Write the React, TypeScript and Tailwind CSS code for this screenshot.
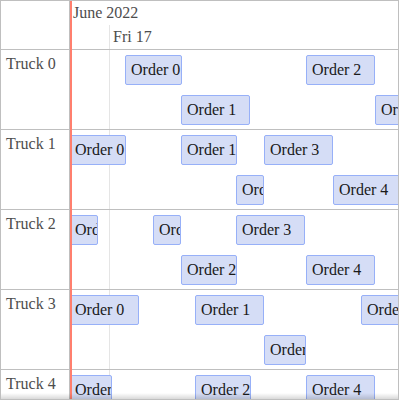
import React from "react";

type Item = { label: string; left: number; width: number; lane: number };

const rows: { name: string; items: Item[] }[] = [
  {
    name: "Truck 0",
    items: [
      { label: "Order 0", left: 55, width: 57, lane: 0 },
      { label: "Order 2", left: 236, width: 69, lane: 0 },
      { label: "Order 1", left: 111, width: 69, lane: 1 },
      { label: "Order 3", left: 305, width: 69, lane: 1 },
    ],
  },
  {
    name: "Truck 1",
    items: [
      { label: "Order 0", left: -1, width: 57, lane: 0 },
      { label: "Order 1", left: 111, width: 56, lane: 0 },
      { label: "Order 3", left: 194, width: 69, lane: 0 },
      { label: "Order 2", left: 166, width: 28, lane: 1 },
      { label: "Order 4", left: 263, width: 69, lane: 1 },
    ],
  },
  {
    name: "Truck 2",
    items: [
      { label: "Order 0", left: -1, width: 29, lane: 0 },
      { label: "Order 1", left: 83, width: 28, lane: 0 },
      { label: "Order 3", left: 166, width: 69, lane: 0 },
      { label: "Order 2", left: 111, width: 56, lane: 1 },
      { label: "Order 4", left: 236, width: 69, lane: 1 },
    ],
  },
  {
    name: "Truck 3",
    items: [
      { label: "Order 0", left: -1, width: 70, lane: 0 },
      { label: "Order 1", left: 125, width: 69, lane: 0 },
      { label: "Order 3", left: 291, width: 69, lane: 0 },
      { label: "Order 2", left: 194, width: 42, lane: 1 },
    ],
  },
  {
    name: "Truck 4",
    items: [
      { label: "Order 0", left: -1, width: 43, lane: 0 },
      { label: "Order 2", left: 125, width: 56, lane: 0 },
      { label: "Order 4", left: 236, width: 69, lane: 0 },
    ],
  },
];

export default function App() {
  return (
    <div className="relative flex w-[399px] h-[400px] overflow-hidden border border-[#bfbfbf] bg-white font-['Liberation_Serif',serif] text-[16px] leading-[18px]">
      {/* Left label panel */}
      <div className="flex w-[69px] shrink-0 flex-col border-r border-[#bfbfbf]">
        <div className="h-[49px] shrink-0 border-b border-[#bfbfbf]" />
        {rows.map((r) => (
          <div
            key={r.name}
            className="h-[80px] shrink-0 border-b border-[#bfbfbf] px-[5px] pt-[5px] text-[#4d4d4d] whitespace-nowrap"
          >
            {r.name}
          </div>
        ))}
      </div>

      {/* Center panel */}
      <div className="relative flex flex-1 flex-col overflow-hidden">
        {/* minor grid line */}
        <div className="absolute left-[39px] top-[24px] bottom-0 w-px bg-[#e5e5e5]" />

        <div className="relative flex h-[49px] shrink-0 flex-col border-b border-[#bfbfbf] text-[#4d4d4d]">
          <div className="h-[24px] pl-[3px] pt-[3px] whitespace-nowrap">June 2022</div>
          <div className="h-[24px] pl-[43px] pt-[3px] whitespace-nowrap">Fri 17</div>
        </div>

        {rows.map((r) => (
          <div key={r.name} className="relative h-[80px] shrink-0 border-b border-[#bfbfbf]">
            {r.items.map((it, i) => (
              <div
                key={i}
                className={`absolute h-[30px] overflow-hidden whitespace-nowrap rounded-[2px] border border-[#97b0f8] bg-[#d5ddf6] p-[5px] leading-[18px] text-[#1a1a1a] ${
                  it.lane === 0 ? "top-[5px]" : "top-[45px]"
                }`}
                style={{ left: it.left, width: it.width }}
              >
                {it.label}
              </div>
            ))}
          </div>
        ))}

        {/* current time line */}
        <div className="absolute left-0 top-0 bottom-0 w-[2px] bg-[#ff7f6e]" />
      </div>

      {/* bottom shadow */}
      <div className="pointer-events-none absolute inset-x-0 bottom-0 h-[6px] bg-linear-to-t from-black/15 to-transparent" />
    </div>
  );
}
